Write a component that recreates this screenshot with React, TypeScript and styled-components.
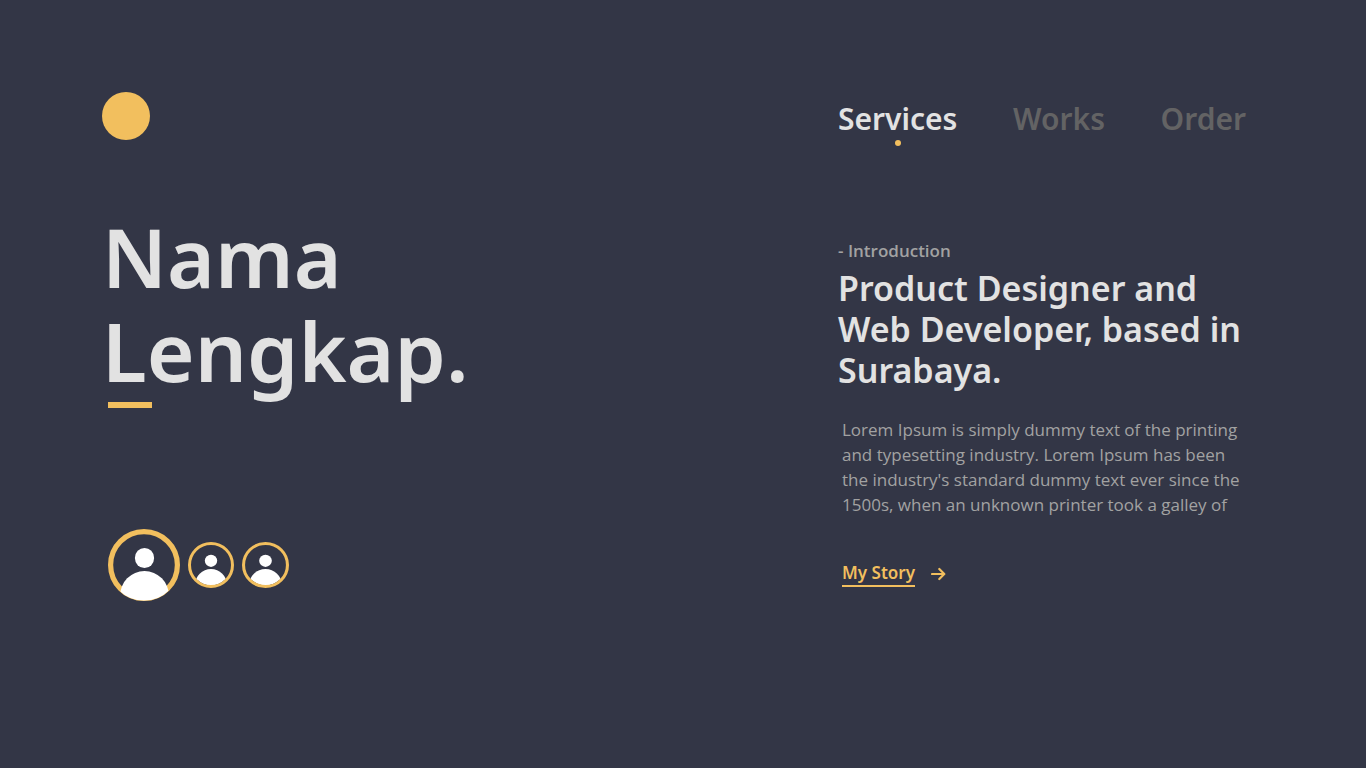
import React from "react";
import styled, { createGlobalStyle } from "styled-components";

const GlobalStyle = createGlobalStyle`
  *, *::before, *::after { box-sizing: border-box; }
  body {
    margin: 0;
    background: #333646;
    font-family: "Noto Sans", "Open Sans", sans-serif;
  }
  h1, h2, p { margin: 0; }
  a { text-decoration: none; color: inherit; }
`;

const Page = styled.div`
  min-height: 100vh;
  padding: 92px 120px 0 102px;
`;

const Columns = styled.div`
  display: grid;
  grid-template-columns: minmax(0, 1fr) 408px;
`;

const Header = styled(Columns).attrs({ as: "header" })`
  height: 56px;
`;

const Logo = styled.a`
  display: block;
  width: 48px;
  height: 48px;
  border-radius: 50%;
  background: #f2bf5e;
`;

const Nav = styled.nav`
  display: flex;
  justify-content: space-between;
  align-items: flex-start;
  padding-top: 7px;
`;

const NavLink = styled.a<{ $active?: boolean }>`
  display: flex;
  flex-direction: column;
  align-items: center;
  gap: 1px;
  font-size: 30px;
  line-height: 40px;
  font-weight: 600;
  color: ${(p) => (p.$active ? "#e2e2e2" : "#636364")};
`;

const ActiveDot = styled.span`
  width: 6px;
  height: 6px;
  border-radius: 50%;
  background: #f2bf5e;
`;

const Hero = styled.section`
  padding-top: 61px;
`;

const Name = styled.h1`
  font-size: 82px;
  line-height: 94px;
  font-weight: 600;
  color: #e2e2e2;
`;

const Accent = styled.div`
  width: 44px;
  height: 6px;
  margin: 5px 0 0 6px;
  background: #f2bf5e;
`;

const Avatars = styled.div`
  display: flex;
  align-items: center;
  gap: 8px;
  margin: 121px 0 0 6px;

  svg { display: block; }
`;

const Intro = styled.section`
  padding-top: 90px;
`;

const Eyebrow = styled.p`
  font-family: "Open Sans", sans-serif;
  font-size: 17px;
  line-height: 25px;
  font-weight: 600;
  color: #a2a2a2;
`;

const Title = styled.h2`
  margin-top: 5px;
  font-size: 34px;
  line-height: 41px;
  font-weight: 600;
  color: #e2e2e2;
  white-space: nowrap;
`;

const Body = styled.p`
  margin: 26px 0 0 4px;
  font-family: "Open Sans", sans-serif;
  font-size: 17px;
  line-height: 25px;
  color: #a2a2a2;
  white-space: nowrap;
`;

const Story = styled.a`
  display: inline-flex;
  align-items: center;
  gap: 16px;
  margin: 43px 0 0 4px;
  font-size: 17px;
  line-height: 25px;
  font-weight: 600;
  && { color: #f2bf5e; }
`;

const StoryText = styled.span`
  border-bottom: 2px solid #f2bf5e;
`;

function LargeAvatar() {
  return (
    <svg width="72" height="72" viewBox="0 0 72 72" role="img" aria-label="Profile">
      <clipPath id="large"><circle cx="36" cy="36" r="35.6" /></clipPath>
      <circle cx="36" cy="36" r="33.4" fill="none" stroke="#f2bf5e" strokeWidth="5.2" />
      <ellipse cx="36.5" cy="29" rx="9.6" ry="10.1" fill="#fff" />
      <ellipse cx="36.5" cy="67" rx="24.5" ry="25" fill="#fff" clipPath="url(#large)" />
    </svg>
  );
}

function SmallAvatar({ id, size }: { id: string; size: number }) {
  return (
    <svg width={size} height="46" viewBox="0 0 46 46" preserveAspectRatio="none" role="img" aria-label="Profile">
      <clipPath id={id}><circle cx="23" cy="23" r="20.2" /></clipPath>
      <ellipse cx="23" cy="18.8" rx="6.2" ry="6.1" fill="#fff" />
      <ellipse cx="23" cy="43" rx="16" ry="16" fill="#fff" clipPath={`url(#${id})`} />
      <circle cx="23" cy="23" r="21.5" fill="none" stroke="#f2bf5e" strokeWidth="3" />
    </svg>
  );
}

export default function App() {
  return (
    <Page>
      <GlobalStyle />
      <Header>
        <Logo href="#" aria-label="Home" />
        <Nav>
          <NavLink href="#services" $active>
            Services
            <ActiveDot />
          </NavLink>
          <NavLink href="#works">Works</NavLink>
          <NavLink href="#order">Order</NavLink>
        </Nav>
      </Header>
      <Columns as="main">
        <Hero>
          <Name>Nama<br />Lengkap.</Name>
          <Accent />
          <Avatars>
            <LargeAvatar />
            <SmallAvatar id="second" size={46} />
            <SmallAvatar id="third" size={47} />
          </Avatars>
        </Hero>
        <Intro>
          <Eyebrow>- Introduction</Eyebrow>
          <Title>
            Product Designer and<br />
            Web Developer, based in<br />
            Surabaya.
          </Title>
          <Body>
            Lorem Ipsum is simply dummy text of the printing<br />
            and typesetting industry. Lorem Ipsum has been<br />
            the industry's standard dummy text ever since the<br />
            1500s, when an unknown printer took a galley of
          </Body>
          <Story href="#story">
            <StoryText>My Story</StoryText>
            <svg width="15" height="14" viewBox="0 0 15 14" fill="none" stroke="#f2bf5e" strokeWidth="2.2" aria-hidden="true">
              <path d="M1 7h12M8.300 2 13.300 7l-5 5" strokeLinejoin="round" strokeLinecap="round" />
            </svg>
          </Story>
        </Intro>
      </Columns>
    </Page>
  );
}
